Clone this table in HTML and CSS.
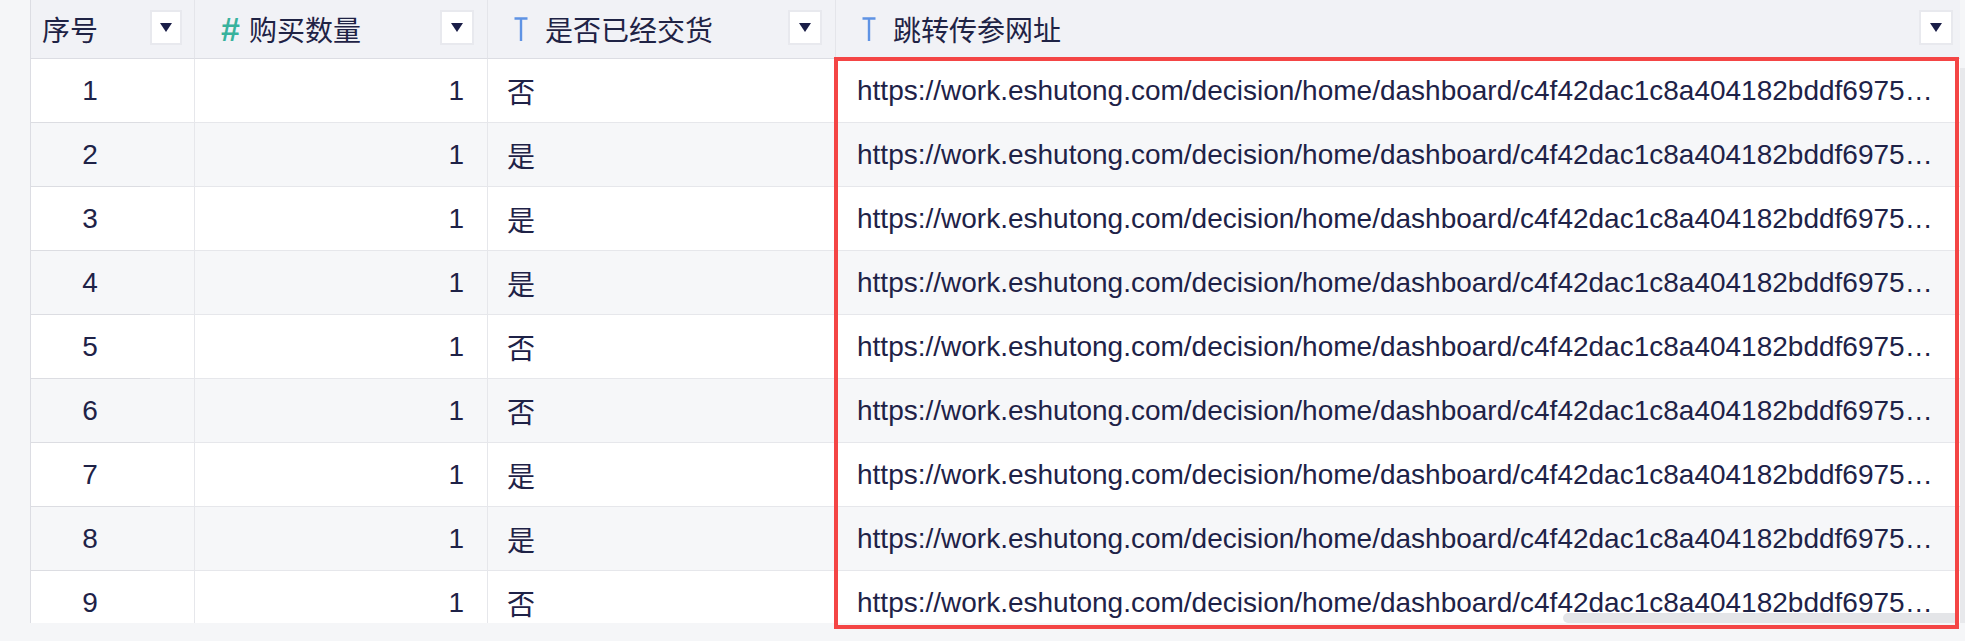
FILE: index.html
```html
<!DOCTYPE html>
<html lang="zh-CN">
<head>
<meta charset="utf-8">
<title>表格</title>
<link rel="stylesheet" href="styles.css">
</head>
<body>
<div class="page">
  <div class="gutter"></div>
  <div class="sheet">
    <div class="grid">
      <div class="hcell first">
        <span class="hlabel">序号</span>
        <span class="drop"><i class="tri"></i></span>
      </div>
      <div class="hcell">
        <span class="hlabel"><span class="ico-num">#</span>购买数量</span>
        <span class="drop"><i class="tri"></i></span>
      </div>
      <div class="hcell">
        <span class="hlabel"><svg class="ico-t" viewBox="0 0 14 26" width="14" height="26"><path d="M0.5 2.5H13.5M7 2.5V25" stroke="#5f93e4" stroke-width="2.4" fill="none"/></svg>是否已经交货</span>
        <span class="drop"><i class="tri"></i></span>
      </div>
      <div class="hcell last">
        <span class="hlabel"><svg class="ico-t" viewBox="0 0 14 26" width="14" height="26"><path d="M0.5 2.5H13.5M7 2.5V25" stroke="#5f93e4" stroke-width="2.4" fill="none"/></svg>跳转传参网址</span>
        <span class="drop"><i class="tri"></i></span>
      </div>
    </div>
    <div class="body" id="rows"></div>
    <div class="hscroll"></div>
  </div>
  <div class="vtrack"></div>
  <div class="mark"></div>
</div>
<script>
  var vals = ["否","是","是","是","否","否","是","是","否"];
  var url = "https://work.eshutong.com/decision/home/dashboard/c4f42dac1c8a404182bddf6975b3e1a7?type=1&id=";
  var html = "";
  for (var i = 0; i < vals.length; i++) {
    html += '<div class="grid row' + (i % 2 ? ' alt' : '') + '">' +
      '<div class="cell idx">' + (i + 1) + '</div>' +
      '<div class="cell num">1</div>' +
      '<div class="cell txt">' + vals[i] + '</div>' +
      '<div class="cell url last"><span class="clip">' + url + (i + 1) + '</span></div>' +
      '</div>';
  }
  document.getElementById("rows").innerHTML = html;
</script>
</body>
</html>
```

FILE: styles.css
```css
html, body {
  margin: 0;
  padding: 0;
}
body {
  background: #f5f6f8;
  font-family: "Liberation Sans", "Noto Sans CJK SC", sans-serif;
  color: #1e2247;
  width: 1965px;
  height: 641px;
  overflow: hidden;
}
.page {
  position: relative;
  display: flex;
  align-items: flex-start;
  height: 641px;
}
.gutter {
  width: 30px;
  height: 623px;
  flex: none;
  border-right: 1px solid #dcdde3;
  background: #f5f6f8;
}
.sheet {
  position: relative;
  width: 1929px;
  height: 623px;
  overflow: hidden;
  background: #ffffff;
  flex: none;
}
.vtrack {
  width: 5px;
  height: 555px;
  margin-top: 68px;
  background: #e8e9ec;
  flex: none;
}
.grid {
  display: grid;
  grid-template-columns: 164px 293px 348px 1fr;
}
.hcell {
  height: 58px;
  background: #f1f2f6;
  border-right: 1px solid #e4e5ea;
  border-bottom: 1px solid #dcdde3;
  display: flex;
  align-items: center;
  justify-content: space-between;
  padding: 0 13px 0 26px;
  font-size: 28px;
  color: #1f2345;
}
.hcell.first {
  padding-left: 11px;
  padding-right: 12px;
}
.hcell.last {
  border-right: none;
  padding-right: 7px;
}
.hlabel {
  display: flex;
  align-items: center;
  white-space: nowrap;
}
.ico-num {
  color: #38b29d;
  font-family: "Liberation Sans", sans-serif;
  font-weight: bold;
  font-size: 34px;
  margin-right: 9px;
  margin-top: 1px;
}
.ico-t {
  margin-right: 17px;
  flex: none;
}
.drop {
  width: 30px;
  height: 31px;
  background: #ffffff;
  border: 2px solid #e8e9ee;
  display: flex;
  align-items: center;
  justify-content: center;
  margin-bottom: 3px;
}
.first .drop {
  width: 28px;
}
.tri {
  width: 0;
  height: 0;
  border-left: 6px solid transparent;
  border-right: 6px solid transparent;
  border-top: 9px solid #1a1e48;
}
.row {
  background: #ffffff;
}
.row.alt {
  background: #f6f7f9;
}
.row .cell {
  height: 64px;
  box-sizing: border-box;
  border-right: 1px solid #e6e7eb;
  border-bottom: 1px solid #e6e7eb;
  display: flex;
  align-items: center;
  font-size: 28px;
}
.cell.idx {
  position: relative;
  justify-content: center;
  padding-right: 45px;
}
.cell.idx::after {
  content: "";
  position: absolute;
  left: 0;
  bottom: -1px;
  width: 119px;
  height: 1px;
  background: #dcdde2;
}
.cell.num {
  justify-content: flex-end;
  padding-right: 23px;
}
.cell.txt {
  padding-left: 19px;
}
.cell.url {
  padding-left: 21px;
  padding-right: 25px;
  border-right: none;
  min-width: 0;
}
.clip {
  display: block;
  overflow: hidden;
  white-space: nowrap;
  text-overflow: ellipsis;
  min-width: 0;
}
.hscroll {
  position: absolute;
  left: 1532px;
  bottom: 0;
  width: 392px;
  height: 10px;
  border-radius: 5px 0 0 5px;
  background: #e4e5e8;
}
.mark {
  position: absolute;
  left: 834px;
  top: 57px;
  width: 1117px;
  height: 564px;
  border: 4px solid #f44545;
  pointer-events: none;
}
```
